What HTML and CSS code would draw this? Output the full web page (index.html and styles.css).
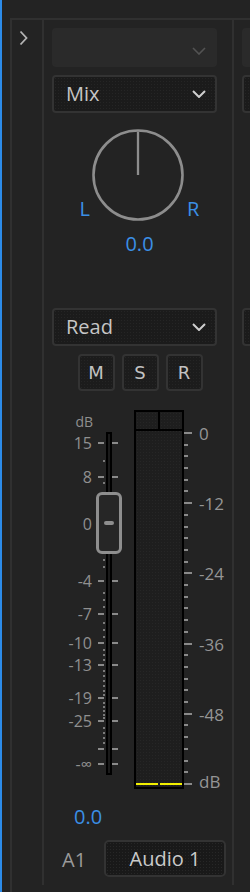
FILE: index.html
```html
<!DOCTYPE html>
<html>
<head>
<meta charset="utf-8">
<title>Audio Track Mixer</title>
<link rel="stylesheet" href="styles.css">
</head>
<body>
<div class="app">
  <div class="panel">
    <div class="side">
      <svg class="expand" width="9" height="16" viewBox="0 0 9 16"><polyline points="1.5,1.5 7.5,8 1.5,14.5"/></svg>
    </div>

    <div class="strip first">
      <div class="dd dd-off"><svg class="chev" width="14" height="8" viewBox="0 0 14 8"><polyline points="1,1 7,7 13,1"/></svg></div>
      <div class="dd"><span class="dd-text">Mix</span><svg class="chev" width="14" height="8" viewBox="0 0 14 8"><polyline points="1,1 7,7 13,1"/></svg></div>

      <div class="knob-sec">
        <div class="knob-row">
          <span class="lr lr-l">L</span>
          <svg class="knob" width="96" height="96" viewBox="0 0 96 96">
            <circle cx="48" cy="48" r="44.5"/>
            <line x1="48" y1="4.5" x2="48" y2="48"/>
          </svg>
          <span class="lr lr-r">R</span>
        </div>
        <div class="pan-val">0.0</div>
      </div>

      <div class="dd"><span class="dd-text">Read</span><svg class="chev" width="14" height="8" viewBox="0 0 14 8"><polyline points="1,1 7,7 13,1"/></svg></div>

      <div class="msr">
        <div class="tbtn">M</div>
        <div class="tbtn">S</div>
        <div class="tbtn">R</div>
      </div>

      <div class="meters">
        <div class="fscale">
          <span class="db-top">dB</span>
          <div class="track"></div>

          <span class="fl" style="top:43px">15</span>
          <span class="fl" style="top:77px">8</span>
          <span class="fl" style="top:124px">0</span>
          <span class="fl" style="top:181px">-4</span>
          <span class="fl" style="top:214px">-7</span>
          <span class="fl" style="top:243px">-10</span>
          <span class="fl" style="top:265px">-13</span>
          <span class="fl" style="top:298px">-19</span>
          <span class="fl" style="top:321px">-25</span>
          <span class="fl" style="top:364px">-∞</span>

          <i class="ft" style="top:42px"></i>
          <i class="ft" style="top:76px"></i>
          <i class="ft" style="top:123px"></i>
          <i class="ft" style="top:180px"></i>
          <i class="ft" style="top:213px"></i>
          <i class="ft" style="top:242px"></i>
          <i class="ft" style="top:264px"></i>
          <i class="ft" style="top:297px"></i>
          <i class="ft" style="top:320px"></i>
          <i class="ft" style="top:348px"></i>
          <i class="ft" style="top:363px"></i>

          <i class="fd" style="top:60px"></i>
          <i class="fd" style="top:82px"></i>
          <i class="fd" style="top:159px"></i>
          <i class="fd" style="top:166px"></i>
          <i class="fd" style="top:192px"></i>
          <i class="fd" style="top:199px"></i>
          <i class="fd" style="top:206px"></i>
          <i class="fd" style="top:222px"></i>
          <i class="fd" style="top:229px"></i>
          <i class="fd" style="top:236px"></i>
          <i class="fd" style="top:249px"></i>
          <i class="fd" style="top:254px"></i>
          <i class="fd" style="top:259px"></i>
          <i class="fd" style="top:270px"></i>
          <i class="fd" style="top:275px"></i>
          <i class="fd" style="top:280px"></i>
          <i class="fd" style="top:285px"></i>
          <i class="fd" style="top:290px"></i>
          <i class="fd" style="top:294px"></i>
          <i class="fd" style="top:302px"></i>
          <i class="fd" style="top:306px"></i>
          <i class="fd" style="top:310px"></i>
          <i class="fd" style="top:314px"></i>
          <i class="fd" style="top:317px"></i>
          <i class="fd" style="top:327px"></i>
          <i class="fd" style="top:332px"></i>
          <i class="fd" style="top:337px"></i>
          <i class="fd" style="top:342px"></i>

          <div class="handle"><span class="grip"></span></div>
        </div>

        <div class="meter">
          <div class="peak"><div class="pk"></div><div class="pk"></div></div>
          <div class="mbody">
            <div class="ch"><span class="lvl"></span></div>
            <div class="ch"><span class="lvl"></span></div>
          </div>
        </div>

        <div class="mscale">
          <i class="mt major" style="top:32px"></i>
          <i class="mt" style="top:44px"></i>
          <i class="mt" style="top:55px"></i>
          <i class="mt" style="top:67px"></i>
          <i class="mt" style="top:79px"></i>
          <i class="mt" style="top:90px"></i>
          <i class="mt major" style="top:102px"></i>
          <i class="mt" style="top:114px"></i>
          <i class="mt" style="top:126px"></i>
          <i class="mt" style="top:137px"></i>
          <i class="mt" style="top:149px"></i>
          <i class="mt" style="top:161px"></i>
          <i class="mt major" style="top:172px"></i>
          <i class="mt" style="top:184px"></i>
          <i class="mt" style="top:196px"></i>
          <i class="mt" style="top:207px"></i>
          <i class="mt" style="top:219px"></i>
          <i class="mt" style="top:231px"></i>
          <i class="mt major" style="top:243px"></i>
          <i class="mt" style="top:254px"></i>
          <i class="mt" style="top:266px"></i>
          <i class="mt" style="top:278px"></i>
          <i class="mt" style="top:289px"></i>
          <i class="mt" style="top:301px"></i>
          <i class="mt major" style="top:313px"></i>
          <i class="mt" style="top:324px"></i>
          <i class="mt" style="top:336px"></i>
          <i class="mt" style="top:348px"></i>
          <i class="mt" style="top:360px"></i>
          <i class="mt" style="top:371px"></i>
          <i class="mt major" style="top:383px"></i>

          <span class="ml" style="top:33px">0</span>
          <span class="ml" style="top:103px">-12</span>
          <span class="ml" style="top:173px">-24</span>
          <span class="ml" style="top:244px">-36</span>
          <span class="ml" style="top:314px">-48</span>
          <span class="ml" style="top:381px">dB</span>
        </div>
      </div>

      <div class="vol">0.0</div>

      <div class="name-row">
        <span class="tid">A1</span>
        <div class="tname">Audio 1</div>
      </div>
    </div>

    <div class="strip">
      <div class="dd dd-off"></div>
      <div class="dd"></div>
      <div class="knob-sec"></div>
      <div class="dd"></div>
    </div>
  </div>
</div>
</body>
</html>
```

FILE: styles.css
```css
* { box-sizing: border-box; }

html, body {
  margin: 0;
  padding: 0;
  background: #232323;
}

body {
  font-family: "Open Sans", "DejaVu Sans", sans-serif;
  color: #c4c4c4;
}

.app {
  width: 250px;
  height: 892px;
  display: flex;
  border-left: 2px solid #2c8be9;
  overflow: hidden;
  background: #232323;
}

.panel {
  flex: 1;
  min-width: 0;
  margin: 18px 0 0 8px;
  border-left: 2px solid #303030;
  border-top: 2px solid #303030;
  display: flex;
  align-items: flex-start;
}

.side {
  width: 30px;
  flex-shrink: 0;
  padding: 10px 0 0 7px;
}

.expand {
  display: block;
  fill: none;
  stroke: #b4b4b4;
  stroke-width: 1.8;
}

.strip {
  width: 190px;
  flex-shrink: 0;
  border-right: 2px solid #303030;
  display: flex;
  flex-direction: column;
  padding-bottom: 8px;
}

.strip.first {
  width: 192px;
  border-left: 2px solid #303030;
}

/* dropdowns */
.dd {
  margin: 8px 15px 0 8px;
  height: 38px;
  border: 2px solid #333333;
  border-radius: 4px;
  background-color: #1b1b1b;
  background-image: radial-gradient(rgba(255,255,255,0.045) 0.6px, transparent 0.8px);
  background-size: 3px 3px;
  display: flex;
  align-items: center;
  padding: 0 9px 0 12px;
}

.dd-off {
  height: 39px;
  border-color: #2a2a2a;
  background: #2a2a2a;
  justify-content: flex-end;
}

.dd-text {
  font-size: 20px;
  line-height: 20px;
  color: #c6c6c6;
}

.chev {
  margin-left: auto;
  display: block;
  fill: none;
  stroke: #cfcfcf;
  stroke-width: 2;
}

.dd-off .chev {
  stroke: #535353;
  stroke-width: 1.6;
  margin-top: 6px;
}

/* pan knob */
.knob-sec {
  height: 187px;
  padding-top: 14px;
}

.knob-row {
  display: flex;
  justify-content: center;
  align-items: flex-end;
}

.knob {
  display: block;
  fill: none;
  stroke: #8d8d8d;
}

.knob circle { stroke-width: 2.6; }
.knob line { stroke-width: 2.3; }

.lr {
  width: 14px;
  font-size: 20px;
  line-height: 20px;
  color: #3b8fe6;
  margin-bottom: 4px;
}

.lr-l { text-align: right; }
.lr-r { text-align: left; padding-left: 1px; }

.pan-val {
  margin-top: 11px;
  padding-left: 3px;
  text-align: center;
  font-size: 20px;
  line-height: 20px;
  color: #3b8fe6;
}

/* M S R */
.msr {
  margin-top: 8px;
  padding-left: 4px;
  display: flex;
  justify-content: center;
  gap: 7px;
}

.tbtn {
  width: 37px;
  height: 37px;
  border: 2px solid #333333;
  border-radius: 4px;
  background-color: #1c1c1c;
  background-image: radial-gradient(rgba(255,255,255,0.04) 0.6px, transparent 0.8px);
  background-size: 3px 3px;
  display: flex;
  align-items: center;
  justify-content: center;
  font-family: "DejaVu Sans", sans-serif;
  font-size: 18px;
  color: #c2c2c2;
}

/* meters & fader */
.meters {
  margin-top: 9px;
  height: 395px;
  display: flex;
}

.fscale {
  position: relative;
  width: 90px;
  flex-shrink: 0;
}

.db-top {
  position: absolute;
  right: 41px;
  top: 22px;
  transform: translateY(-50%);
  font-size: 14px;
  line-height: 14px;
  color: #8f8f8f;
}

.fl {
  position: absolute;
  right: 42px;
  transform: translateY(-50%);
  font-size: 16px;
  line-height: 16px;
  color: #909090;
  white-space: nowrap;
}

.ft {
  position: absolute;
  left: 54px;
  width: 20px;
  height: 2px;
  background: linear-gradient(to right, #8a8a8a 0 6px, transparent 6px 14px, #8a8a8a 14px 20px);
}

.fd {
  position: absolute;
  left: 59px;
  width: 2px;
  height: 2px;
  background: #7a7a7a;
}

.track {
  position: absolute;
  left: 62px;
  top: 32px;
  width: 6px;
  height: 343px;
  border: 2px solid #000;
  background: #1a1a1a;
}

.handle {
  position: absolute;
  left: 52px;
  top: 92px;
  width: 26px;
  height: 62px;
  border: 3.5px solid #8e8e8e;
  border-radius: 6px;
  background: #262626;
  display: flex;
  align-items: center;
  justify-content: center;
}

.grip {
  width: 10px;
  height: 4px;
  border-radius: 2px;
  background: #8e8e8e;
}

.meter {
  width: 50px;
  flex-shrink: 0;
  margin-top: 10px;
  height: 379px;
  border: 2px solid #000;
  display: flex;
  flex-direction: column;
  background-color: #1e1e1e;
  background-image: radial-gradient(rgba(255,255,255,0.035) 0.6px, transparent 0.8px);
  background-size: 3px 3px;
}

.peak {
  height: 19px;
  border-bottom: 2px solid #000;
  display: flex;
}

.pk { flex: 1; }
.pk + .pk { border-left: 2px solid #000; }

.mbody {
  flex: 1;
  display: flex;
  gap: 2px;
  align-items: flex-end;
  padding-bottom: 2px;
}

.ch {
  flex: 1;
  display: flex;
  align-items: flex-end;
}

.lvl {
  display: block;
  width: 100%;
  height: 2px;
  background: #f2f000;
}

.mscale {
  position: relative;
  flex: 1;
}

.mt {
  position: absolute;
  left: 0;
  width: 4px;
  height: 2px;
  background: #8a8a8a;
}

.mt.major { width: 8px; }

.ml {
  position: absolute;
  left: 15px;
  transform: translateY(-50%);
  font-size: 17px;
  line-height: 17px;
  color: #959595;
  white-space: nowrap;
}

/* bottom */
.vol {
  margin-top: 12px;
  padding-left: 30px;
  font-size: 20px;
  line-height: 20px;
  color: #3b8fe6;
}

.name-row {
  margin-top: 13px;
  height: 37px;
  display: flex;
  align-items: center;
}

.tid {
  margin-left: 18px;
  margin-top: 3px;
  font-size: 20px;
  line-height: 20px;
  color: #9a9a9a;
}

.tname {
  margin-left: auto;
  margin-right: 6px;
  width: 122px;
  height: 37px;
  border: 2px solid #333333;
  border-radius: 5px;
  background-color: #191919;
  background-image: radial-gradient(rgba(255,255,255,0.06) 0.6px, transparent 0.8px);
  background-size: 3px 3px;
  display: flex;
  align-items: center;
  justify-content: center;
  font-size: 20px;
  line-height: 20px;
  color: #cacaca;
}
```
